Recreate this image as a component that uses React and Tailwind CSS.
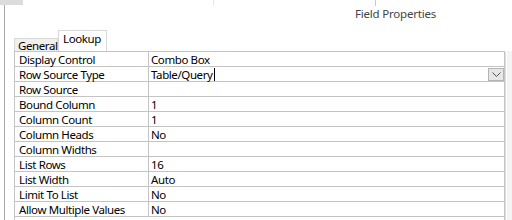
import React from 'react';

const rows = [
  ['Display Control', 'Combo Box'],
  ['Row Source Type', 'Table/Query'],
  ['Row Source', ''],
  ['Bound Column', '1'],
  ['Column Count', '1'],
  ['Column Heads', 'No'],
  ['Column Widths', ''],
  ['List Rows', '16'],
  ['List Width', 'Auto'],
  ['Limit To List', 'No'],
  ['Allow Multiple Values', 'No'],
];

function Row({ label, value, index }) {
  return (
    <div className="flex h-[15px] border-b border-[#c4c4c4]">
      <div className="w-[134px] shrink-0 border-r border-[#c4c4c4] pl-[4px] leading-[15px] text-black">{label}</div>
      <div className="relative flex-1 pl-[2px] leading-[15px] text-black">
        {value}
        {index === 1 && (
          <>
            <span className="ml-px inline-block h-[13px] w-px bg-black align-[-2px]" />
            {/* dropdown button */}
            <div className="absolute right-0 top-[1px] flex h-[13px] w-[16px] items-center justify-center border border-[#b4b4b4] bg-[#e6e6e6]">
              <svg width="9" height="5" viewBox="0 0 9 5">
                <path d="M0.5 0.5 L4.5 4.5 L8.5 0.5" fill="none" stroke="#555" strokeWidth="1" />
              </svg>
            </div>
          </>
        )}
      </div>
    </div>
  );
}

export default function App() {
  return (
    <div className="relative flex h-[220px] w-[512px] overflow-hidden bg-white font-['Segoe_UI','Noto_Sans',sans-serif] text-[11.5px] tracking-[-0.4px]">
      {/* left frame edge */}
      <div className="w-[4px] shrink-0" />
      <div className="w-px shrink-0 bg-[#a8a8a8]" />
      <div className="absolute left-0 top-0 h-[5px] w-[23px] bg-[#dcdcdc]" />

      <div className="flex flex-1 flex-col">
        {/* header */}
        <div className="relative h-[30px]">
          <div className="absolute left-[208px] top-0 h-[5px] w-px bg-[#e4e4e4]" />
          <div className="absolute left-[370px] top-0 h-[6px] w-px bg-[#c8c8c8]" />
          <div className="pl-[350px] pt-[6px] text-[11.5px] leading-[16px] tracking-[-0.2px] text-[#444]">Field Properties</div>
        </div>

        {/* tabs */}
        <div className="flex h-[21px] items-end pl-[9px]">
          <div className="flex h-[13px] w-[44px] items-center border border-b-0 border-[#d9d9d9] bg-[#f0f0f0] pl-[3px] pt-[1px] text-[11.5px] text-black">
            General
          </div>
          <div className="flex h-[21px] w-[49px] items-start border border-b-0 border-[#d9d9d9] bg-white pl-[4px] pt-[1px] text-[11.5px] leading-[14px] text-black">
            Lookup
          </div>
        </div>

        {/* property grid */}
        <div className="flex flex-1 pl-[9px]">
          <div className="w-[491px] shrink-0 border border-b-0 border-[#c4c4c4]">
            {rows.map(([l, v], i) => (
              <Row key={l} label={l} value={v} index={i} />
            ))}
          </div>
          <div className="mt-[1px] w-[2px] shrink-0 border-l border-[#dcdcdc]" />
          <div className="w-[5px] shrink-0 bg-[#f4f4f4]" />
        </div>
      </div>
    </div>
  );
}
